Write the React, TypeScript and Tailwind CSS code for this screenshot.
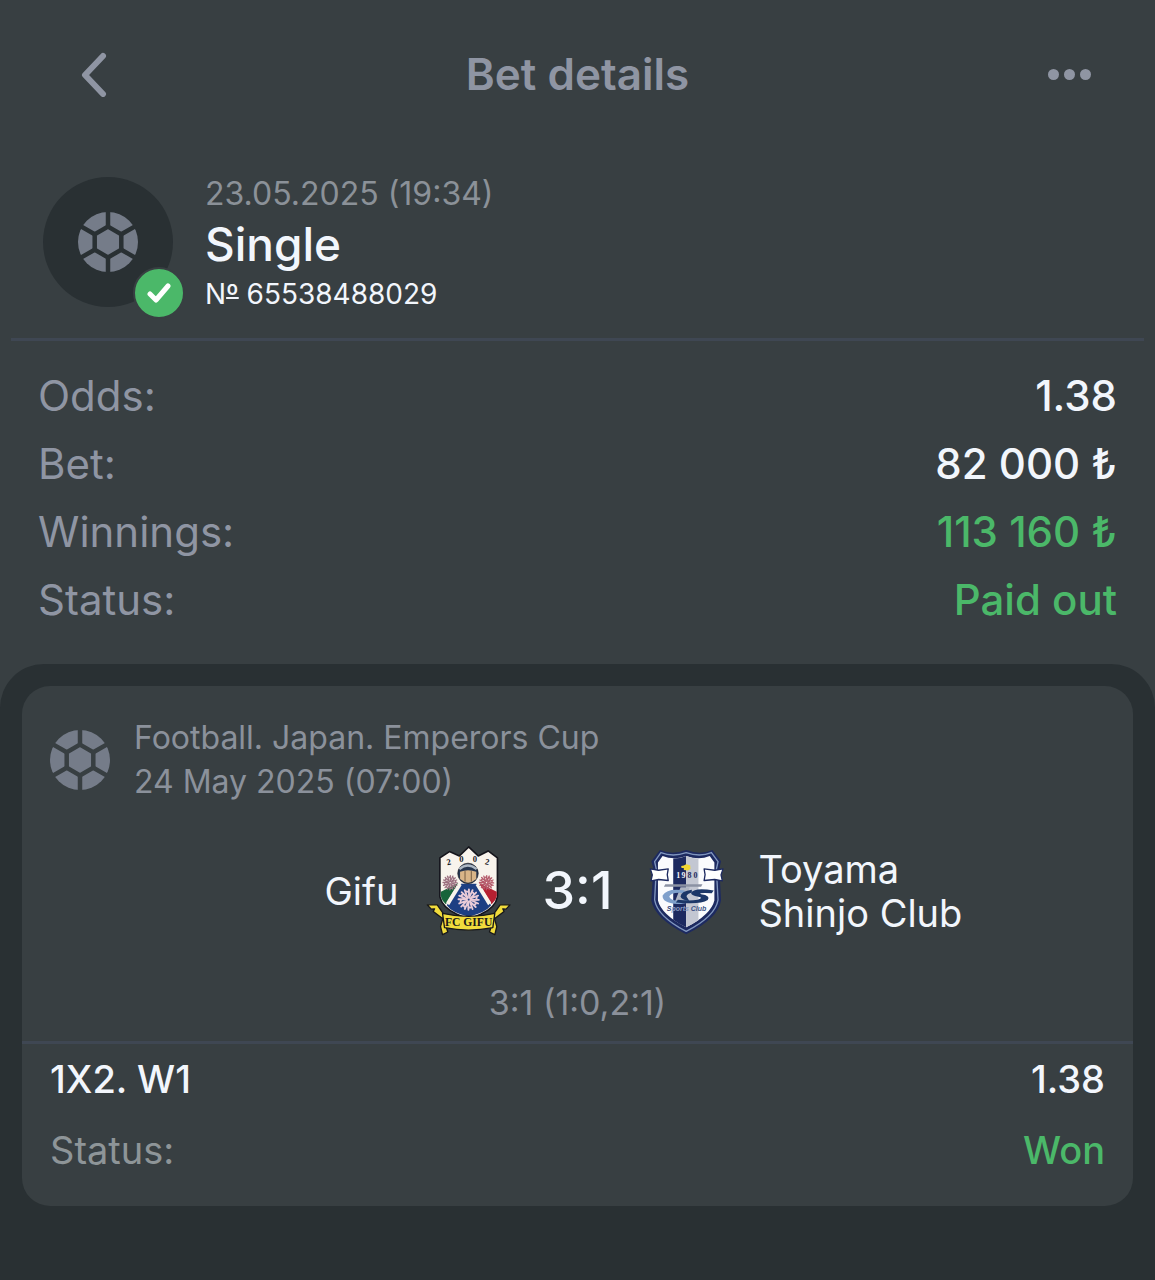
import { useId } from "react";

function BallIcon() {
  const maskId = useId();

  return (
    <svg viewBox="0 0 60 60" className="size-[60px] shrink-0" aria-hidden="true">
      <mask id={maskId}>
        <rect width="60" height="60" fill="white" />
        <g stroke="black" strokeWidth="4.5" fill="none">
          <path d="M30 14.6 43.3 22.3V37.7L30 45.4 16.7 37.7V22.3Z" />
          <path d="M30 14.6V-2M43.3 22.3 60 12.7M43.3 37.7 60 47.3M30 45.4V62M16.7 37.7 0 47.3M16.7 22.3 0 12.7" />
        </g>
      </mask>
      <circle cx="30" cy="30" r="30" fill="#757c89" mask={`url(#${maskId})`} />
    </svg>
  );
}

function Flower({ x, y, r, color }: { x: number; y: number; r: number; color: string }) {
  return (
    <g transform={`translate(${x} ${y}) scale(${r / 32})`} stroke={color} strokeWidth="5" fill="none" strokeLinecap="round">
      {[12, 57, 102, 147, 192, 237, 282, 327].map((a) => (
        <path key={a} transform={`rotate(${a})`} d="M0 -5 -5 -27M0 -5 5 -27M-5 -20 -10 -20" />
      ))}
    </g>
  );
}

function GifuCrest() {
  return (
    <svg viewBox="45 30 260 285" className="w-[86px] shrink-0" role="img" aria-label="FC Gifu">
      <path
        d="M90 72 119 53 149 66 177 39 206 66 236 51 264 72V190Q258 222 215 242L177 258 140 242Q98 222 90 190Z"
        fill="#f8f3ec"
        stroke="#15151c"
        strokeWidth="5"
        strokeLinejoin="round"
      />
      <path d="M93 174 146 148 108 212Q94 200 93 186Z" fill="#17643a" />
      <path d="M262 174 208 148 246 212Q260 200 262 186Z" fill="#b51f31" />
      <path d="M154 150 200 150 245 215Q230 236 177 250 124 236 111 215Z" fill="#1d3f83" />
      <path d="M146 148 156 154 118 215 109 207Z" fill="#f8f3ec" />
      <path d="M208 148 198 154 236 215 245 207Z" fill="#f8f3ec" />
      <Flower x={121} y={147} r={25} color="#9c7080" />
      <Flower x={231} y={147} r={25} color="#b4596a" />
      <Flower x={177} y={198} r={36} color="#e9cbd8" />
      <circle cx="175" cy="119" r="31" fill="#27364f" stroke="#15151c" strokeWidth="2" />
      <path d="M149 106Q174 84 201 106" fill="none" stroke="#aeb8c4" strokeWidth="7" />
      <path d="M151 114Q175 104 200 114V136Q175 158 151 136Z" fill="#d9b588" />
      <path d="M166 112V144M185 112V144" stroke="#755c43" strokeWidth="3" />
      <g fill="#18181d" fontFamily="Liberation Serif, serif" fontSize="26" fontWeight="700" textAnchor="middle">
        <text x="117" y="93" transform="rotate(-12 117 85)">2</text>
        <text x="155" y="85">0</text>
        <text x="196" y="85">0</text>
        <text x="233" y="93" transform="rotate(12 233 85)">2</text>
      </g>
      <g fill="#f1dc3c" stroke="#17171a" strokeWidth="4" strokeLinejoin="round">
        <path d="M103 244 82 214 52 214 64 227 74 226 70 234 100 257Z" />
        <path d="M251 244 272 214 302 214 290 227 280 226 284 234 254 257Z" />
        <path d="M100 252 92 280 98 304 114 296Z" />
        <path d="M254 252 262 280 256 304 240 296Z" />
        <path d="M98 240Q177 258 256 240L250 283Q177 298 104 283Z" />
      </g>
      <text x="177" y="278" fill="#1b1a18" fontFamily="Liberation Serif, serif" fontSize="35" fontWeight="700" textAnchor="middle">
        FC GIFU
      </text>
    </svg>
  );
}

function ToyamaCrest() {
  return (
    <svg viewBox="40 35 235 265" className="w-[78px] shrink-0" role="img" aria-label="Toyama Shinjo Club">
      <path
        d="M76 44Q114 60 155 44 198 60 234 44L260 78 255 100 260 196Q252 250 155 298 60 250 50 196L56 100 50 78Z"
        fill="#1d2a60"
      />
      <path
        d="M79 52Q115 66 155 52 196 66 231 52L251 79 246 102 251 194Q243 244 155 289 68 244 60 194L65 102 60 79Z"
        fill="none"
        stroke="#8096be"
        strokeWidth="4"
      />
      <path d="M84 62Q118 76 155 62 194 76 226 62L240 82V196Q230 238 155 277 80 238 70 196V82Z" fill="#fafbfd" />
      <path d="M116 70Q138 70 155 62V277Q132 266 116 254Z" fill="#1d2a60" />
      <path d="M155 62Q175 70 192 70V256Q174 268 155 277Z" fill="#c3c7d2" />
      <g fill="#fff" stroke="#1d2a60" strokeWidth="4" strokeLinejoin="round">
        <path d="M47 101 72 105 101 101 98 118 101 136 72 133 49 137 53 119Z" />
        <path d="M266 101 241 105 209 101 212 118 209 136 241 133 264 137 260 119Z" />
      </g>
      <path d="M140 92 148 91 155 87 167 90 168 101 160 106 148 104 148 98 141 98Z" fill="#f2d634" />
      <g fontFamily="Liberation Serif, serif" fontSize="24" fontWeight="700" textAnchor="middle">
        <text x="131" y="127" fill="#f3f5fa">1</text>
        <text x="147" y="127" fill="#f3f5fa">9</text>
        <text x="165" y="127" fill="#1d2a60">8</text>
        <text x="183" y="127" fill="#1d2a60">0</text>
      </g>
      <path d="M92 147H204L200 155H88Z" fill="#8b92a3" />
      <path d="M138 156H166L150 198H122Z" fill="#aeb4c2" />
      <path d="M150 166Q98 158 84 181 82 203 128 207 152 207 166 200L162 193Q112 204 104 185 108 170 150 174Z" fill="#7fa0cb" />
      <path d="M238 166Q180 156 170 173 168 181 192 185 208 188 190 194 164 198 130 194L124 202Q196 210 220 195 230 181 200 177 188 172 232 174Z" fill="#1c3768" />
      <path d="M172 164Q140 168 138 184 140 194 164 198L160 190Q148 180 172 172Z" fill="#1c3768" />
      <text x="156" y="229" fill="#3d5387" fontFamily="Liberation Sans, sans-serif" fontSize="21" fontStyle="italic" fontWeight="700" textAnchor="middle">
        <tspan fill="#2e4176">S</tspan>
        <tspan fill="#8a9cc2">ports</tspan> Club
      </text>
    </svg>
  );
}

const summary = [
  { label: "Odds:", value: "1.38", color: "text-[#f2f6fc]" },
  { label: "Bet:", value: "82 000 ₺", color: "text-[#f2f6fc]" },
  { label: "Winnings:", value: "113 160 ₺", color: "text-[#4bb869]" },
  { label: "Status:", value: "Paid out", color: "text-[#4bb869]" },
];

export default function App() {
  return (
    <div className="flex min-h-screen flex-col bg-[#383f42] font-['Inter',sans-serif] text-[#f2f6fc]">
      <header className="grid h-[148px] grid-cols-[1fr_auto_1fr] items-center px-16 text-[#8f95a3]">
        <button type="button" aria-label="Back" className="flex size-[60px] items-center justify-center">
          <svg viewBox="0 0 26 46" className="h-[46px] w-[26px]" fill="none" stroke="currentColor" strokeWidth="6" strokeLinecap="round" strokeLinejoin="round">
            <path d="M22 5 4 24 22 43" />
          </svg>
        </button>
        <h1 className="text-[44px] font-semibold">Bet details</h1>
        <button type="button" aria-label="More" className="flex h-[60px] items-center gap-[5px] justify-self-end">
          <span className="size-[11px] rounded-full bg-current" />
          <span className="size-[11px] rounded-full bg-current" />
          <span className="size-[11px] rounded-full bg-current" />
        </button>
      </header>

      <section className="mx-[11px] flex items-center gap-8 border-b-3 border-[#3f4753] px-8 pt-5 pb-[22px]">
        <div className="relative flex size-[130px] shrink-0 items-center justify-center rounded-full bg-[#293033]">
          <BallIcon />
          <span className="absolute -right-3 -bottom-3 flex size-[52px] items-center justify-center rounded-full border-2 border-[#383f42] bg-[#4bb869]">
            <svg viewBox="0 0 24 20" className="h-5 w-6" fill="none" stroke="white" strokeWidth="5" strokeLinecap="round" strokeLinejoin="round">
              <path d="M3 11 9 17 21 3" />
            </svg>
          </span>
        </div>
        <div className="pt-1">
          <p className="text-[32px] leading-[44px] text-[#8b9198]">23.05.2025 (19:34)</p>
          <h2 className="text-[46px] leading-[56px] font-medium">Single</h2>
          <p className="text-[28px] leading-[44px]">
            N<span className="underline decoration-2 underline-offset-[-7px]">º</span> 65538488029
          </p>
        </div>
      </section>

      <dl className="px-[38px] pt-5 pb-[31px]">
        {summary.map((row) => (
          <div key={row.label} className="flex h-[68px] items-center justify-between text-[42px]">
            <dt className="text-[#8f95a3]">{row.label}</dt>
            <dd className={`font-medium ${row.color}`}>{row.value}</dd>
          </div>
        ))}
      </dl>

      <main className="flex-1 rounded-t-[44px] bg-[#293033] p-[22px]">
        <article className="rounded-[28px] bg-[#383f42]">
          <div className="flex items-center gap-6 px-7 pt-[30px]">
            <BallIcon />
            <p className="text-[32px] leading-[44px] text-[#8b919b]">
              Football. Japan. Emperors Cup
              <br />
              24 May 2025 (07:00)
            </p>
          </div>

          <div className="mt-10 grid grid-cols-[1fr_auto_1fr] items-center gap-8">
            <div className="flex items-center justify-end gap-[26px]">
              <span className="text-[38px]">Gifu</span>
              <GifuCrest />
            </div>
            <strong className="text-[52px] font-medium">3:1</strong>
            <div className="flex items-center gap-8 pl-1">
              <ToyamaCrest />
              <span className="w-[210px] text-[38px] leading-[44px]">Toyama Shinjo Club</span>
            </div>
          </div>

          <p className="mt-[43px] border-b-3 border-[#3f4753] pb-4 text-center text-[34px] leading-[44px] text-[#8b919b]">
            3:1 (1:0,2:1)
          </p>

          <dl className="px-7 pb-5 text-[38px]">
            <div className="flex h-[71px] items-center justify-between">
              <dt className="font-medium">1X2. W1</dt>
              <dd className="font-medium">1.38</dd>
            </div>
            <div className="flex h-[71px] items-center justify-between">
              <dt className="text-[#8e9598]">Status:</dt>
              <dd className="font-medium text-[#4bb869]">Won</dd>
            </div>
          </dl>
        </article>
      </main>
    </div>
  );
}
